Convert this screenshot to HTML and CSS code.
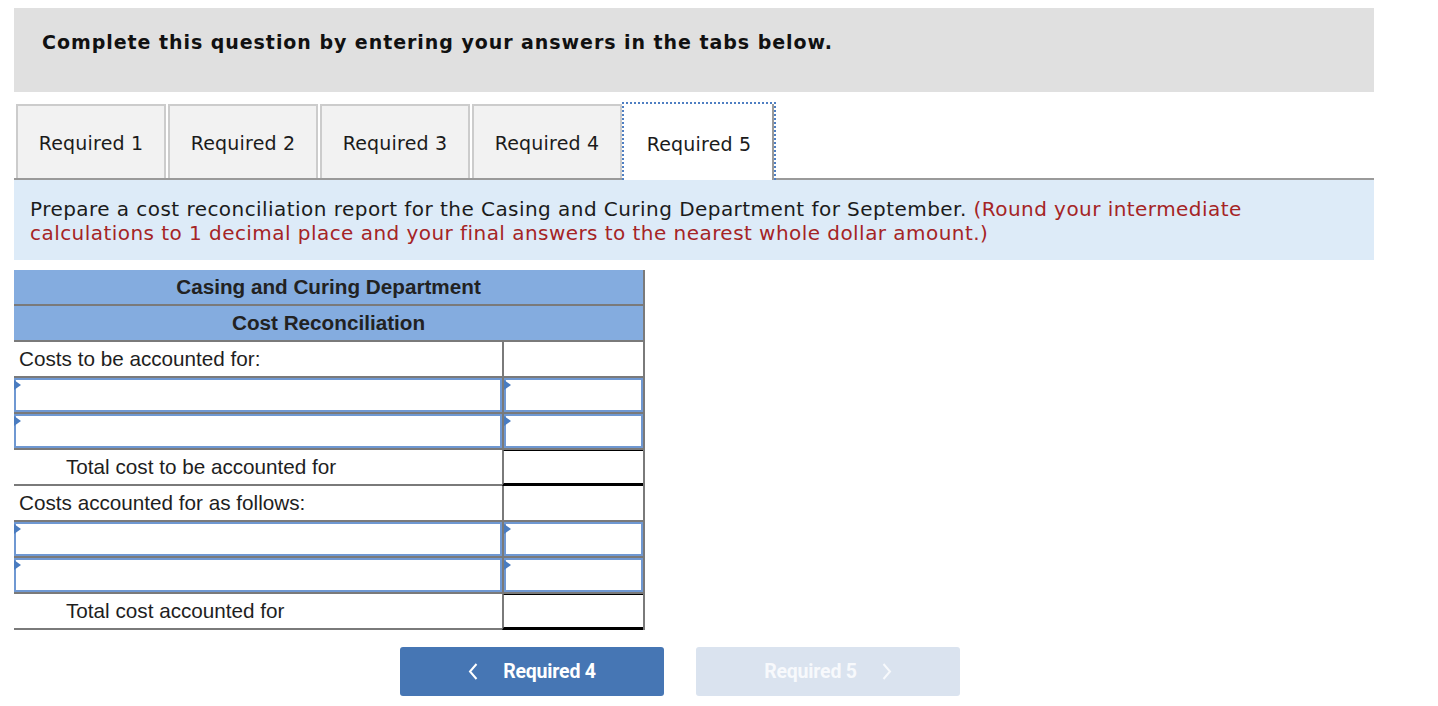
FILE: index.html
```html
<!DOCTYPE html>
<html>
<head>
<meta charset="utf-8">
<link rel="stylesheet" href="styles.css">
</head>
<body>
<div class="page">
  <div class="banner">Complete this question by entering your answers in the tabs below.</div>

  <div class="tabs">
    <div class="tab">Required 1</div>
    <div class="tab">Required 2</div>
    <div class="tab">Required 3</div>
    <div class="tab">Required 4</div>
    <div class="tab active">Required 5</div>
  </div>

  <div class="instr">
    Prepare a cost reconciliation report for the Casing and Curing Department for September. <span class="red">(Round your intermediate calculations to 1 decimal place and your final answers to the nearest whole dollar amount.)</span>
  </div>

  <div class="report">
    <div class="hrow">Casing and Curing Department</div>
    <div class="hrow">Cost Reconciliation</div>

    <div class="row">
      <div class="lbl">Costs to be accounted for:</div>
      <div class="amt"></div>
    </div>
    <div class="row">
      <div class="lbl inp"><div class="box"></div></div>
      <div class="amt inp"><div class="box"></div></div>
    </div>
    <div class="row">
      <div class="lbl inp"><div class="box"></div></div>
      <div class="amt inp"><div class="box"></div></div>
    </div>
    <div class="row">
      <div class="lbl total-lbl">Total cost to be accounted for</div>
      <div class="amt total"></div>
    </div>
    <div class="row">
      <div class="lbl">Costs accounted for as follows:</div>
      <div class="amt"></div>
    </div>
    <div class="row">
      <div class="lbl inp"><div class="box"></div></div>
      <div class="amt inp"><div class="box"></div></div>
    </div>
    <div class="row">
      <div class="lbl inp"><div class="box"></div></div>
      <div class="amt inp"><div class="box"></div></div>
    </div>
    <div class="row">
      <div class="lbl total-lbl">Total cost accounted for</div>
      <div class="amt total"></div>
    </div>
  </div>

  <div class="nav">
    <button class="btn prev">
      <svg width="10" height="17" viewBox="0 0 10 17"><path d="M8.5 1 L2 8.5 L8.5 16" fill="none" stroke="#fff" stroke-width="2"/></svg>
      <span>Required 4</span>
    </button>
    <button class="btn next">
      <span>Required 5</span>
      <svg width="10" height="17" viewBox="0 0 10 17"><path d="M1.5 1 L8 8.5 L1.5 16" fill="none" stroke="#fff" stroke-width="2"/></svg>
    </button>
  </div>
</div>
</body>
</html>
```

FILE: styles.css
```css
* { box-sizing: border-box; }
body {
  margin: 0;
  background: #fff;
  font-family: "DejaVu Sans", Verdana, sans-serif;
  color: #1b1b1b;
}
.page {
  padding: 8px 0 0 14px;
  width: 1374px;
}
.banner {
  height: 84px;
  background: #e0e0e0;
  padding: 21px 0 0 28px;
  font-weight: bold;
  font-size: 19px;
  letter-spacing: 0.95px;
  line-height: 26px;
  color: #111;
}
.tabs {
  margin-top: 12px;
  display: flex;
  align-items: flex-start;
  gap: 2px;
  padding-left: 2px;
  border-bottom: 2px solid #9a9a9a;
  height: 76px;
}
.tab {
  width: 150px;
  height: 74px;
  background: #f2f2f2;
  border: 2px solid #cccccc;
  border-bottom: none;
  font-size: 19px;
  letter-spacing: 0.2px;
  display: flex;
  align-items: center;
  justify-content: center;
  color: #1b1b1b;
  padding-top: 2px;
}
.tab.active {
  background: #fff;
  width: 154px;
  height: 78px;
  margin-top: -2px;
  margin-left: -2px;
  border: 2px dotted #4f7fc2;
  border-bottom: none;
  box-shadow: inset -2px 0 0 #9a9a9a;
  padding-top: 4px;
}
.instr {
  background: #ddebf8;
  padding: 17px 16px 15px 16px;
  font-size: 20px;
  letter-spacing: 0.45px;
  line-height: 24px;
  height: 80px;
  color: #1b1b1b;
}
.red { color: #a52425; }

.report {
  margin-top: 10px;
  width: 631px;
  border-right: 2px solid #7a7a7a;
  font-family: "Liberation Sans", Arial, sans-serif;
  font-size: 20.7px;
  color: #1e1e1e;
}
.hrow {
  height: 36px;
  background: #84acdf;
  border-bottom: 2px solid #7a7a7a;
  text-align: center;
  font-weight: bold;
  line-height: 34px;
  color: #222;
}
.row {
  display: flex;
  height: 36px;
}
.lbl {
  flex: 0 0 488px;
  border-bottom: 2px solid #7a7a7a;
  padding-left: 5px;
  line-height: 34px;
}
.total-lbl { padding-left: 52px; }
.amt {
  flex: 1;
  border-left: 2px solid #7a7a7a;
  border-bottom: 2px solid #7a7a7a;
}
.amt.total {
  margin-top: -2px;
  border-top: 3px solid #000;
  border-bottom: 3px solid #000;
}
.inp {
  position: relative;
  padding: 0;
}
.box {
  height: 34px;
  border: 2px solid #6f98d2;
  background: #fff;
}
.inp::before {
  content: "";
  position: absolute;
  left: 0;
  top: 2px;
  border-left: 7px solid #4a7cc0;
  border-top: 5px solid transparent;
  border-bottom: 5px solid transparent;
}

.nav {
  margin-top: 17px;
  margin-left: 386px;
  display: flex;
  gap: 32px;
}
.btn {
  width: 264px;
  height: 49px;
  border: none;
  border-radius: 3px;
  display: flex;
  align-items: center;
  justify-content: center;
  gap: 25px;
  font-family: Roboto, "Liberation Sans", sans-serif;
  font-weight: bold;
  font-size: 19.5px;
  letter-spacing: -0.2px;
  color: #fff;
  padding: 0;
}
.btn.prev { background: #4676b4; }
.btn.next { background: #dae3ef; color: #f7f9fc; }
.btn.next svg path { stroke: #f7f9fc; }
```
